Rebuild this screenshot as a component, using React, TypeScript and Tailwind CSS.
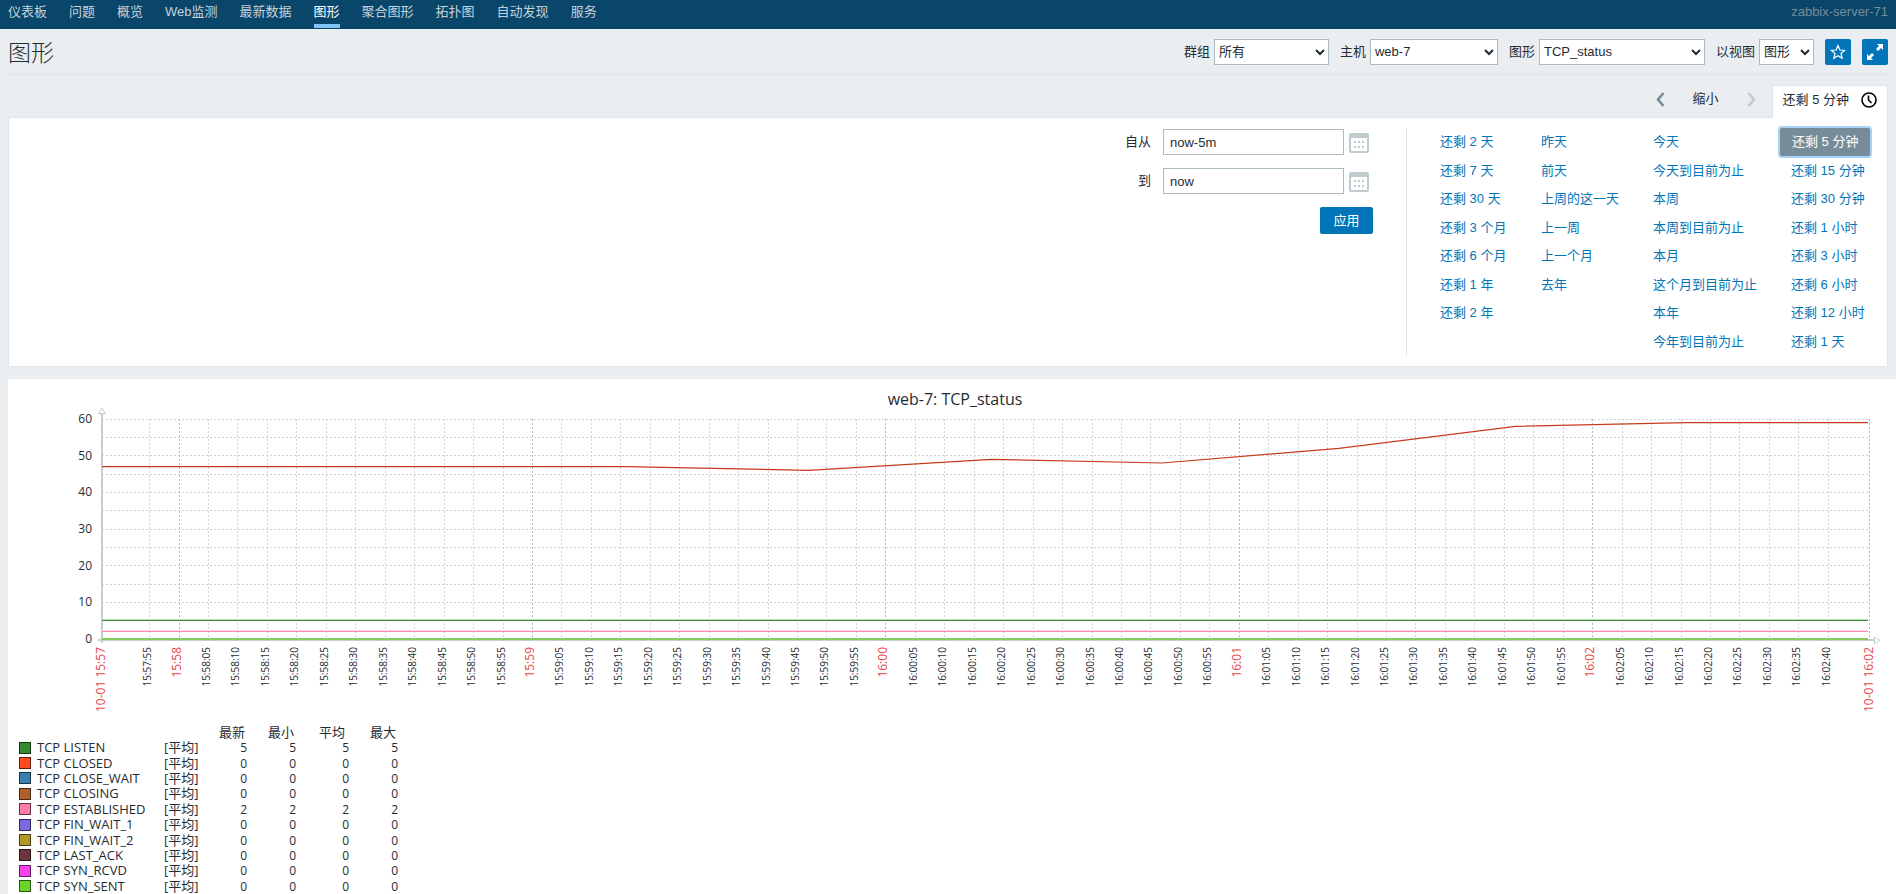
import { useLayoutEffect, useRef, useState } from "react";

const NAV = ["仪表板", "问题", "概览", "Web监测", "最新数据", "图形", "聚合图形", "拓扑图", "自动发现", "服务"];

const FILTERS = [
  { id: "group", label: "群组", value: "所有", width: "w-[115px]" },
  { id: "host", label: "主机", value: "web-7", width: "w-[128px]" },
  { id: "graph", label: "图形", value: "TCP_status", width: "w-[166px]" },
  { id: "view", label: "以视图", value: "图形", width: "w-[55px]" },
];

const PERIODS = [
  { width: "w-[101px]", items: ["还剩 2 天", "还剩 7 天", "还剩 30 天", "还剩 3 个月", "还剩 6 个月", "还剩 1 年", "还剩 2 年"] },
  { width: "w-[112px]", items: ["昨天", "前天", "上周的这一天", "上一周", "上一个月", "去年"] },
  {
    width: "w-[138px]",
    items: ["今天", "今天到目前为止", "本周", "本周到目前为止", "本月", "这个月到目前为止", "本年", "今年到目前为止"],
  },
  {
    width: "w-[98px]",
    items: ["还剩 5 分钟", "还剩 15 分钟", "还剩 30 分钟", "还剩 1 小时", "还剩 3 小时", "还剩 6 小时", "还剩 12 小时", "还剩 1 天"],
  },
];
const SELECTED = "还剩 5 分钟";

const LEGEND = [
  { name: "TCP LISTEN", color: "#338a2e", value: 5 },
  { name: "TCP CLOSED", color: "#fa4b21", value: 0 },
  { name: "TCP CLOSE_WAIT", color: "#3c80b0", value: 0 },
  { name: "TCP CLOSING", color: "#ad6029", value: 0 },
  { name: "TCP ESTABLISHED", color: "#ff7dac", value: 2 },
  { name: "TCP FIN_WAIT_1", color: "#7d67e0", value: 0 },
  { name: "TCP FIN_WAIT_2", color: "#b59629", value: 0 },
  { name: "TCP LAST_ACK", color: "#6f353f", value: 0 },
  { name: "TCP SYN_RCVD", color: "#f743ea", value: 0 },
  { name: "TCP SYN_SENT", color: "#6ad32b", value: 0 },
];

// [seconds since the start of the period, value]
const TIME_WAIT = [
  [0, 47],
  [89, 47],
  [120, 46],
  [151, 49],
  [180, 48],
  [210, 52],
  [240, 58],
  [269, 59],
  [300, 59],
];

// Chart geometry, the plot takes whatever width is left between the margins
const LEFT = 94;
const RIGHT = 27;
const TOP = 40;
const BOTTOM = 260;
const START = 15 * 3600 + 57 * 60 + 47;
const PERIOD = 300;

const pad = (n: number) => String(n).padStart(2, "0");

function timeLabel(t: number) {
  const hm = `${pad(Math.floor(t / 3600))}:${pad(Math.floor(t / 60) % 60)}`;
  return t % 60 === 0 ? hm : `${hm}:${pad(t % 60)}`;
}

function VerticalLabel({ x, red, children }: { x: number; red?: boolean; children: string }) {
  return (
    <text
      transform={`translate(${x + 4} 268) rotate(-90)`}
      textAnchor="end"
      className={red ? "fill-[#e84545] text-xs" : "fill-[#1f2c33] text-[10px]"}
    >
      {children}
    </text>
  );
}

function Chart() {
  const box = useRef<HTMLDivElement>(null);
  const [width, setWidth] = useState(1888);

  useLayoutEffect(() => {
    const el = box.current;
    if (!el) return;
    const measure = () => setWidth(el.clientWidth);
    measure();
    const observer = new ResizeObserver(measure);
    observer.observe(el);
    return () => observer.disconnect();
  }, []);

  const plot = Math.max(width - LEFT - RIGHT, 100);
  const right = LEFT + plot;
  const x = (s: number) => LEFT + (s / PERIOD) * plot;
  const y = (v: number) => BOTTOM - (v / 60) * (BOTTOM - TOP);

  const ticks: number[] = [];
  for (let t = START + 8; t < START + PERIOD - 5; t += 5) ticks.push(t);
  const levels = Array.from({ length: 12 }, (_, i) => (i + 1) * 5);

  return (
    <div ref={box} className="overflow-hidden">
      <svg width={width} height={346} className="block font-['Open_Sans','Noto_Sans_CJK_SC',sans-serif]">
        <text x={width / 2 + 3} y={26} textAnchor="middle" className="fill-[#1f2c33] text-base">
          web-7: TCP_status
        </text>

        <g strokeDasharray="2 2" shapeRendering="crispEdges" stroke="#ccd5d9">
          {levels.map((v) => (
            <line key={v} x1={LEFT} x2={right} y1={Math.floor(y(v)) + 0.5} y2={Math.floor(y(v)) + 0.5} />
          ))}
          {ticks.map((t) => {
            const px = Math.round(x(t - START)) + 0.5;
            return <line key={t} x1={px} x2={px} y1={TOP} y2={BOTTOM} stroke={t % 60 === 0 ? "#acbbc2" : "#ccd5d9"} />;
          })}
          <line x1={right + 0.5} x2={right + 0.5} y1={TOP} y2={BOTTOM} stroke="#acbbc2" />
        </g>

        <g stroke="#c3ced3" fill="#fff">
          <path d={`M${LEFT} 34V264`} strokeWidth={2} />
          <path d={`M90 261H${right + 6}`} strokeWidth={2} />
          <path d={`M${LEFT - 3.5} 34.5h7l-3.5 -5.5z`} />
          <path d={`M${right + 5.5} 258v7l5.5 -3.5z`} />
        </g>

        <g fill="none">
          <path d={`M${LEFT} ${y(0)}H${right - 1}`} stroke="#85cb5c" strokeWidth={2} />
          <path d={`M${LEFT} 252.5H${right - 1}`} stroke="#ff87b3" />
          <path d={`M${LEFT} 251.5H${right - 1}`} stroke="#ffdce9" />
          <path d={`M${LEFT} 241.5H${right - 1}`} stroke="#3b8f36" />
          <path d={`M${LEFT} 240.5H${right - 1}`} stroke="#bcdcba" />
          <polyline
            points={TIME_WAIT.map(([s, v]) => `${x(s) - (s === PERIOD ? 1 : 0)},${y(v)}`).join(" ")}
            stroke="#c83a1b"
            strokeWidth={1.2}
          />
        </g>

        {[0, 10, 20, 30, 40, 50, 60].map((v) => (
          <text key={v} x={84} y={Math.round(y(v)) + 4} textAnchor="end" className="fill-[#1f2c33] text-xs">
            {v}
          </text>
        ))}

        <VerticalLabel x={LEFT - 1} red>
          10-01 15:57
        </VerticalLabel>
        {ticks.map((t) => (
          <VerticalLabel key={t} x={x(t - START) - 2} red={t % 60 === 0}>
            {timeLabel(t)}
          </VerticalLabel>
        ))}
        <VerticalLabel x={right} red>
          10-01 16:02
        </VerticalLabel>
      </svg>
    </div>
  );
}

function Legend() {
  return (
    <table className="ml-[11px] h-[169px] table-fixed border-collapse font-['Open_Sans','Noto_Sans_CJK_SC',sans-serif] text-[13px] leading-[15px] text-[#1f2c33]">
      <thead>
        <tr>
          <th className="w-[18px] p-0" />
          <th className="w-[127px] p-0" />
          <th className="w-[37px] p-0" />
          <th className="w-[46px] p-0 pr-[2px] text-right font-normal">最新</th>
          <th className="w-[49px] p-0 pr-[2px] text-right font-normal">最小</th>
          <th className="w-[53px] p-0 pr-[4px] text-right font-normal">平均</th>
          <th className="w-[49px] p-0 pr-[2px] text-right font-normal">最大</th>
        </tr>
      </thead>
      <tbody>
        {LEGEND.map((row) => (
          <tr key={row.name}>
            <td className="p-0">
              <svg width="12" height="12" className="block">
                <rect width="12" height="12" fill={row.color} />
                <rect x="0.5" y="0.5" width="11" height="11" fill="none" stroke="#000" strokeOpacity="0.6" />
              </svg>
            </td>
            <td className="p-0">{row.name}</td>
            <td className="p-0">[平均]</td>
            {[0, 1, 2, 3].map((i) => (
              <td key={i} className="p-0 text-right text-xs leading-[15px]">
                {row.value}
              </td>
            ))}
          </tr>
        ))}
      </tbody>
    </table>
  );
}

function CalendarButton({ label }: { label: string }) {
  return (
    <button type="button" aria-label={label} className="mt-1 mr-1 shrink-0">
      <svg width="20" height="20" viewBox="0 0 20 20" fill="#c0cbd0">
        <path d="M2 0h16a2 2 0 0 1 2 2v16a2 2 0 0 1-2 2H2a2 2 0 0 1-2-2V2a2 2 0 0 1 2-2zm0 5v13h16V5z" fillRule="evenodd" />
        <path d="M5 8h2v2H5zM9 8h2v2H9zM13 8h2v2h-2zM5 13h2v2H5zM9 13h2v2H9zM13 13h2v2h-2z" />
      </svg>
    </button>
  );
}

function DateField({ id, label, value }: { id: string; label: string; value: string }) {
  return (
    <div className="flex h-[26px] items-start">
      <label htmlFor={id} className="mr-3 w-10 text-right leading-[26px]">
        {label}
      </label>
      <input id={id} defaultValue={value} className="mr-[5px] h-[26px] w-[181px] border border-[#acbbc2] bg-white px-[6px] outline-none" />
      <CalendarButton label={`${label} 日历`} />
    </div>
  );
}

export default function App() {
  return (
    <div className="flex min-h-screen flex-col bg-[#ebeef0] font-['Liberation_Sans','Noto_Sans_CJK_SC',sans-serif] text-[13px] leading-[18px] text-[#1f2c33]">
      <header className="flex h-[29px] justify-between bg-[#0a466a] px-2">
        <nav className="flex gap-[22px]">
          {NAV.map((item) => (
            <a
              key={item}
              href="#"
              className={
                item === "图形"
                  ? "h-7 border-b-4 border-[#7ec4f5] pt-[3px] text-white"
                  : "h-7 pt-[3px] text-[#c3d3dd]"
              }
            >
              {item}
            </a>
          ))}
        </nav>
        <span className="pt-[3px] text-[#768d99]">zabbix-server-71</span>
      </header>

      <div className="mx-2 flex h-[46px] items-center justify-between border-b border-[#dfe4e7]">
        <h1 className="pt-[3px] text-[23px] leading-7 font-light">图形</h1>
        <form className="flex items-center gap-[11px]">
          {FILTERS.map((f) => (
            <div key={f.id} className="flex items-center gap-1">
              <label htmlFor={f.id}>{f.label}</label>
              <select id={f.id} className={`h-[26px] border border-[#acbbc2] bg-white ${f.width}`}>
                <option>{f.value}</option>
              </select>
            </div>
          ))}
          <button type="button" aria-label="收藏" className="grid size-[26px] place-items-center rounded-[2px] bg-[#0275b8]">
            <svg width="16" height="16" viewBox="0 0 16 16" fill="none" stroke="#fff" strokeWidth="1.2">
              <path d="M8 1.5l1.9 4.500 4.800.4-3.700 3.100 1.200 4.800L8 11.700l-4.200 2.600L5 9.500 1.300 6.400l4.800-.4z" />
            </svg>
          </button>
          <button type="button" aria-label="全屏" className="grid size-[26px] place-items-center rounded-[2px] bg-[#0275b8]">
            <svg width="16" height="16" viewBox="0 0 16 16" fill="#fff">
              <path d="M10 0H16V6L14 4L11 7L9 5L12 2Z" />
              <path d="M6 16H0V10L2 12L5 9L7 11L4 14Z" />
            </svg>
          </button>
        </form>
      </div>

      <div className="mx-2 mt-[10px] flex justify-end">
        <div className="flex h-7 items-center pr-[16px]">
          <button type="button" aria-label="上一个">
            <svg width="9" height="15" viewBox="0 0 9 15" fill="none" stroke="#768d99" strokeWidth="2.6">
              <path d="M7.5 1L2 7.5l5.5 6.5" />
            </svg>
          </button>
          <button type="button" className="mx-7">
            缩小
          </button>
          <button type="button" aria-label="下一个" disabled>
            <svg width="9" height="15" viewBox="0 0 9 15" fill="none" stroke="#c0cbd0" strokeWidth="2.6">
              <path d="M1.500 1L7 7.500 1.500 14" />
            </svg>
          </button>
        </div>
        <button
          type="button"
          className="relative -mb-px flex h-[33px] items-center gap-3 rounded-t-[2px] border border-b-0 border-[#dfe4e7] bg-white px-[10px] pb-[5px]"
        >
          还剩 5 分钟
          <svg width="16" height="16" viewBox="0 0 16 16" fill="none" stroke="#000" strokeWidth="1.6">
            <circle cx="8" cy="8" r="7" />
            <path d="M7.5 3.500V8l3 3" />
          </svg>
        </button>
      </div>

      <section className="mx-2 flex justify-end border border-[#dfe4e7] bg-white py-[10px] pr-2">
        <form className="mr-[33px] flex flex-col gap-[13px] pt-px">
          <DateField id="from" label="自从" value="now-5m" />
          <DateField id="to" label="到" value="now" />
          <button type="button" className="h-[27px] w-[53px] self-end rounded-[2px] bg-[#0275b8] text-white">
            应用
          </button>
        </form>
        <div className="flex border-l border-[#dfe4e7] pl-[23px]">
          {PERIODS.map((col) => (
            <ul key={col.items[0]} className={`grid h-[228px] grid-rows-8 ${col.width}`}>
              {col.items.map((item) => (
                <li key={item} className="flex items-center">
                  <a
                    href="#"
                    className={
                      item === SELECTED
                        ? "rounded-[2px] bg-[#768d99] px-3 py-[5px] -ml-px whitespace-nowrap text-white ring-2 ring-[#a8d2f5]"
                        : "px-[10px] whitespace-nowrap text-[#0275b8]"
                    }
                  >
                    {item}
                  </a>
                </li>
              ))}
            </ul>
          ))}
        </div>
      </section>

      <main className="mt-3 ml-2 flex-1 bg-white">
        <Chart />
        <Legend />
      </main>
    </div>
  );
}
